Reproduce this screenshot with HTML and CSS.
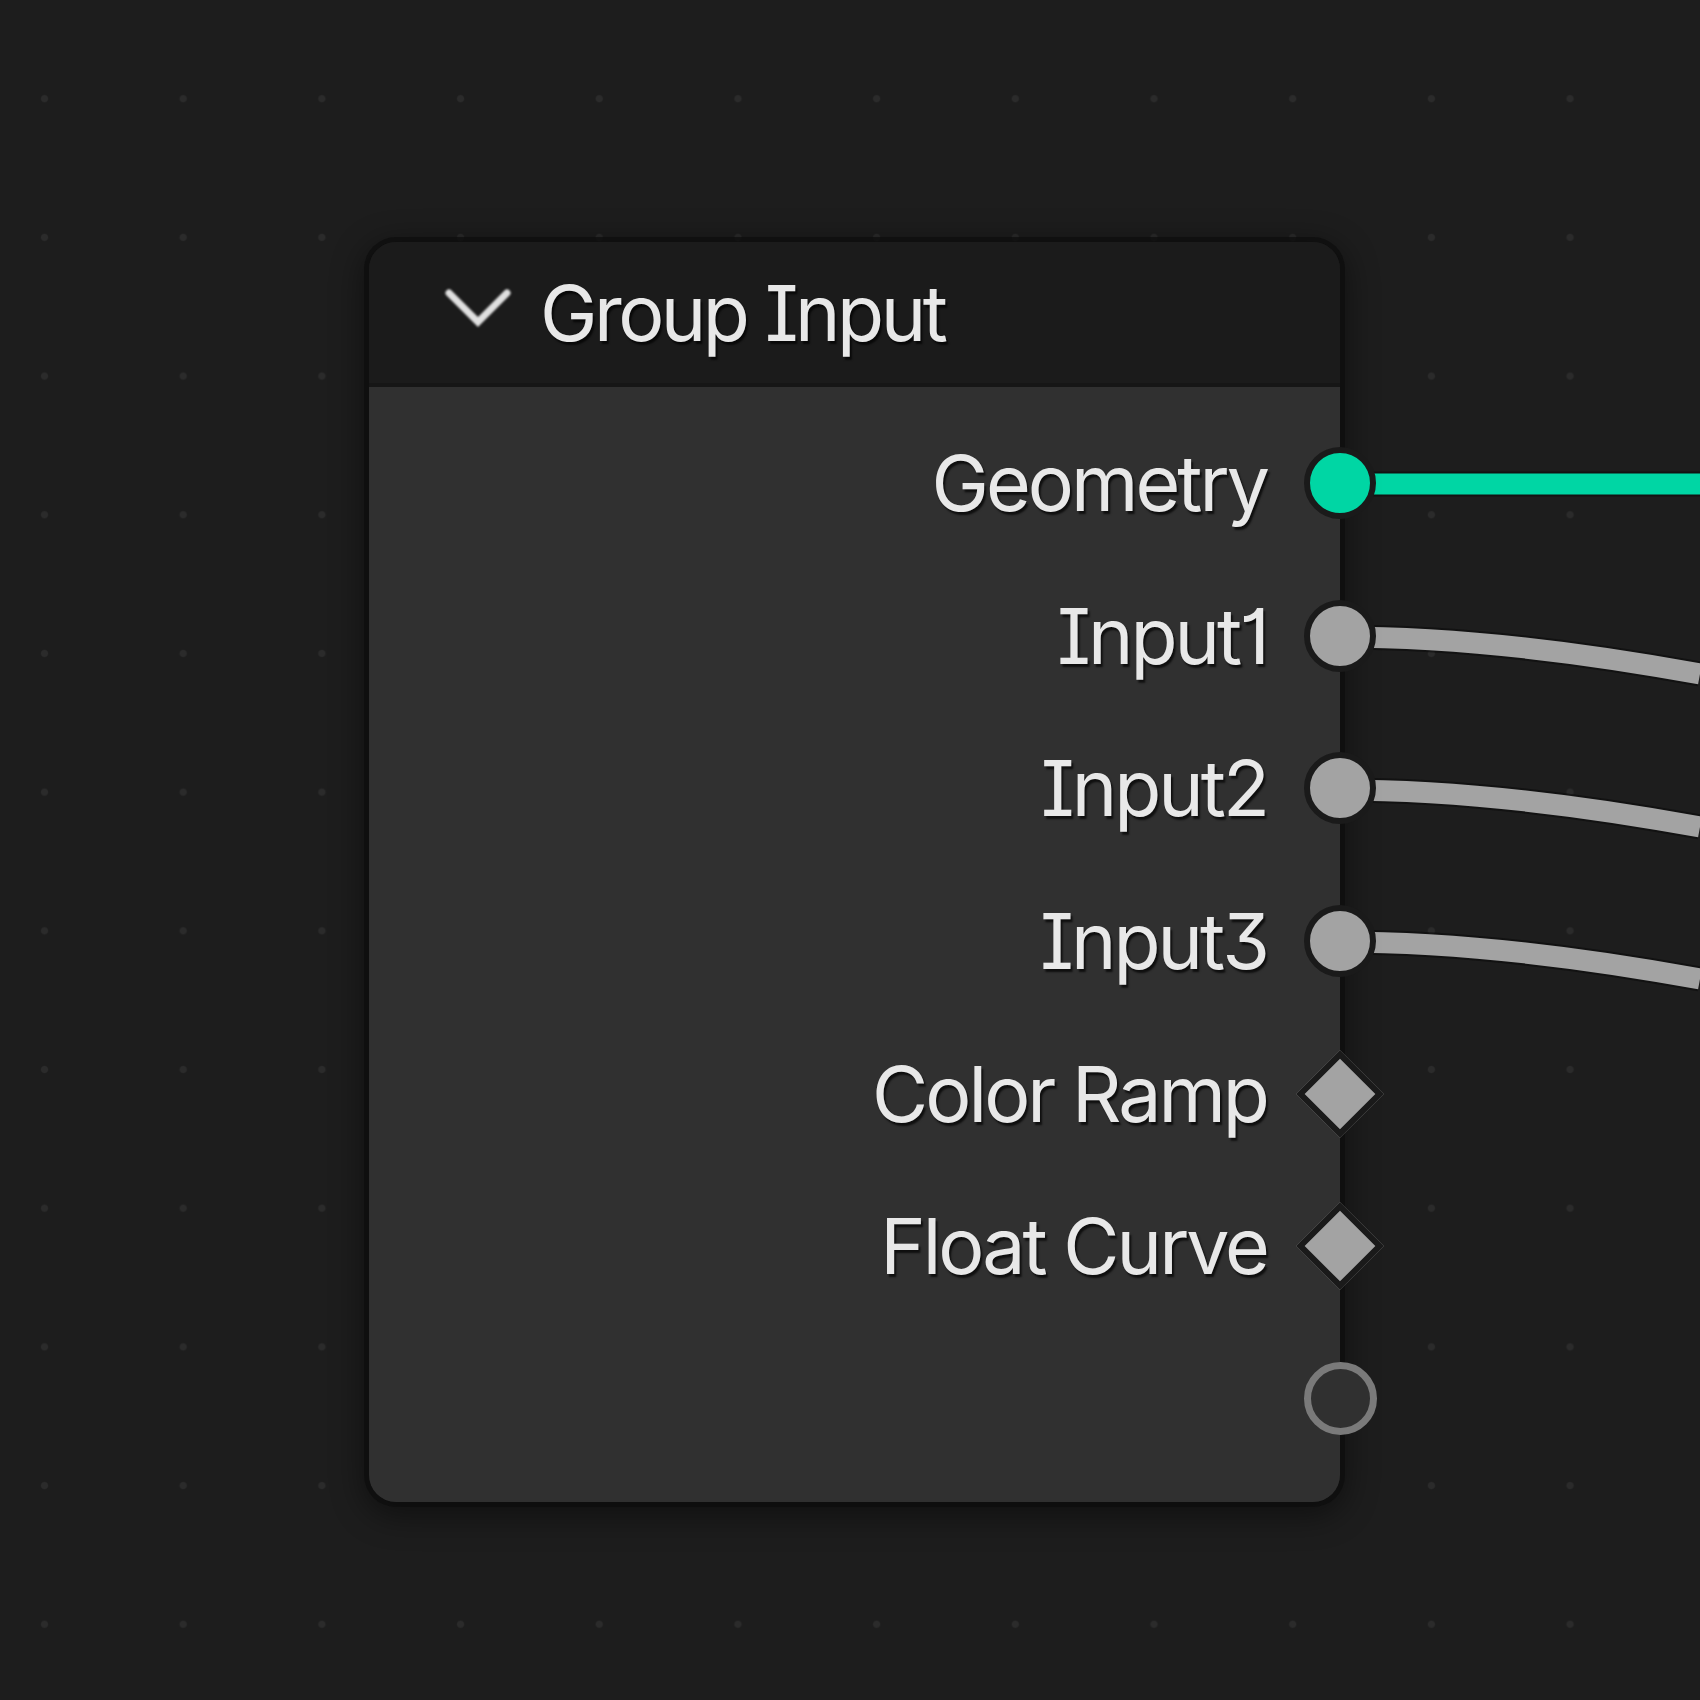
FILE: index.html
```html
<!DOCTYPE html>
<html lang="en">
<head>
<meta charset="utf-8">
<title>Group Input</title>
<link rel="stylesheet" href="styles.css">
</head>
<body>
<div class="canvas">
  <svg class="links" width="1700" height="1700" viewBox="0 0 1700 1700">
    <g class="link-outline">
      <path d="M1340 484 L1700 484"/>
      <path d="M1340 637 C1460 637 1580 652 1700 674"/>
      <path d="M1340 790 C1460 790 1580 805 1700 827"/>
      <path d="M1340 942 C1460 942 1580 957 1700 979"/>
    </g>
    <path class="link link-geo" d="M1340 484 L1700 484"/>
    <path class="link link-val" d="M1340 637 C1460 637 1580 652 1700 674"/>
    <path class="link link-val" d="M1340 790 C1460 790 1580 805 1700 827"/>
    <path class="link link-val" d="M1340 942 C1460 942 1580 957 1700 979"/>
  </svg>

  <div class="node">
    <div class="node-header">
      <svg class="chevron" width="66" height="40" viewBox="0 0 66 40">
        <path d="M4 5 L33 34 L62 5"/>
      </svg>
      <span class="node-title">Group Input</span>
    </div>
    <div class="node-body">
      <div class="row"><span class="label">Geometry</span><span class="socket socket-geo"></span></div>
      <div class="row"><span class="label">Input1</span><span class="socket socket-val"></span></div>
      <div class="row"><span class="label">Input2</span><span class="socket socket-val"></span></div>
      <div class="row"><span class="label">Input3</span><span class="socket socket-val"></span></div>
      <div class="row"><span class="label">Color Ramp</span><span class="socket socket-diamond"></span></div>
      <div class="row"><span class="label">Float Curve</span><span class="socket socket-diamond"></span></div>
      <div class="row"><span class="socket socket-empty"></span></div>
    </div>
  </div>
</div>
</body>
</html>
```

FILE: styles.css
```css
html, body {
  margin: 0;
  padding: 0;
  background: #1d1d1d;
}

.canvas {
  position: relative;
  width: 1700px;
  height: 1700px;
  overflow: hidden;
  background-color: #1d1d1d;
  background-image: radial-gradient(circle, #2b2b2b 0, #2b2b2b 3px, rgba(43,43,43,0) 4.2px);
  background-size: 138.7px 138.7px;
  background-position: -24.85px 29.35px;
  font-family: Inter, "Noto Sans", "DejaVu Sans", sans-serif;
  font-feature-settings: "cv01", "cv08", "cv09";
}

.links {
  position: absolute;
  left: 0;
  top: 0;
}

.link-outline path {
  fill: none;
  stroke: rgba(10,10,10,0.55);
  stroke-width: 25;
}

.link {
  fill: none;
  stroke-width: 21;
}

.link-geo { stroke: #00d6a4; }
.link-val { stroke: #a3a3a3; }

.node {
  position: absolute;
  left: 369px;
  top: 242px;
  width: 971px;
  height: 1260px;
  border-radius: 27px;
  display: flex;
  flex-direction: column;
  box-shadow: 0 0 0 5px rgba(14,14,14,0.75), 0 8px 32px 6px rgba(0,0,0,0.45);
}

.node-header {
  height: 141px;
  flex: none;
  background: #1b1b1b;
  border-radius: 27px 27px 0 0;
  border-bottom: 4px solid #161616;
  display: flex;
  align-items: center;
  padding-left: 76px;
}

.chevron {
  flex: none;
  margin-top: -10px;
  filter: blur(0.8px);
}

.chevron path {
  fill: none;
  stroke: #e0e0e0;
  stroke-width: 7;
  stroke-linecap: round;
  stroke-linejoin: miter;
}

.node-title {
  margin-left: 29px;
  font-size: 77px;
  letter-spacing: -3.5px;
  color: #e8e8e8;
  text-shadow: 2px 3px 2px rgba(0,0,0,0.7);
  white-space: nowrap;
}

.node-body {
  flex: 1;
  background: #303030;
  border-radius: 0 0 27px 27px;
  padding-top: 20px;
  display: flex;
  flex-direction: column;
}

.row {
  position: relative;
  height: 152.6px;
  display: flex;
  align-items: center;
  justify-content: flex-end;
  padding-right: 73px;
}

.label {
  font-size: 77px;
  letter-spacing: -3px;
  color: #e8e8e8;
  text-shadow: 2px 3px 2px rgba(0,0,0,0.7);
  white-space: nowrap;
}

.socket {
  position: absolute;
  right: -36px;
  top: 50%;
  box-sizing: border-box;
}

.socket-geo,
.socket-val {
  width: 72px;
  height: 72px;
  margin-top: -36px;
  border-radius: 50%;
  border: 6px solid #1a1a1a;
}

.socket-geo { background: #00d6a4; }
.socket-val { background: #a3a3a3; }

.socket-diamond {
  width: 62px;
  height: 62px;
  right: -31px;
  margin-top: -31px;
  background: #a3a3a3;
  border: 6px solid #1a1a1a;
  transform: rotate(45deg);
}

.socket-empty {
  width: 73px;
  height: 73px;
  margin-top: -36.5px;
  right: -36.5px;
  border-radius: 50%;
  border: 7px solid #7a7a7a;
  background: #303030;
}
```
